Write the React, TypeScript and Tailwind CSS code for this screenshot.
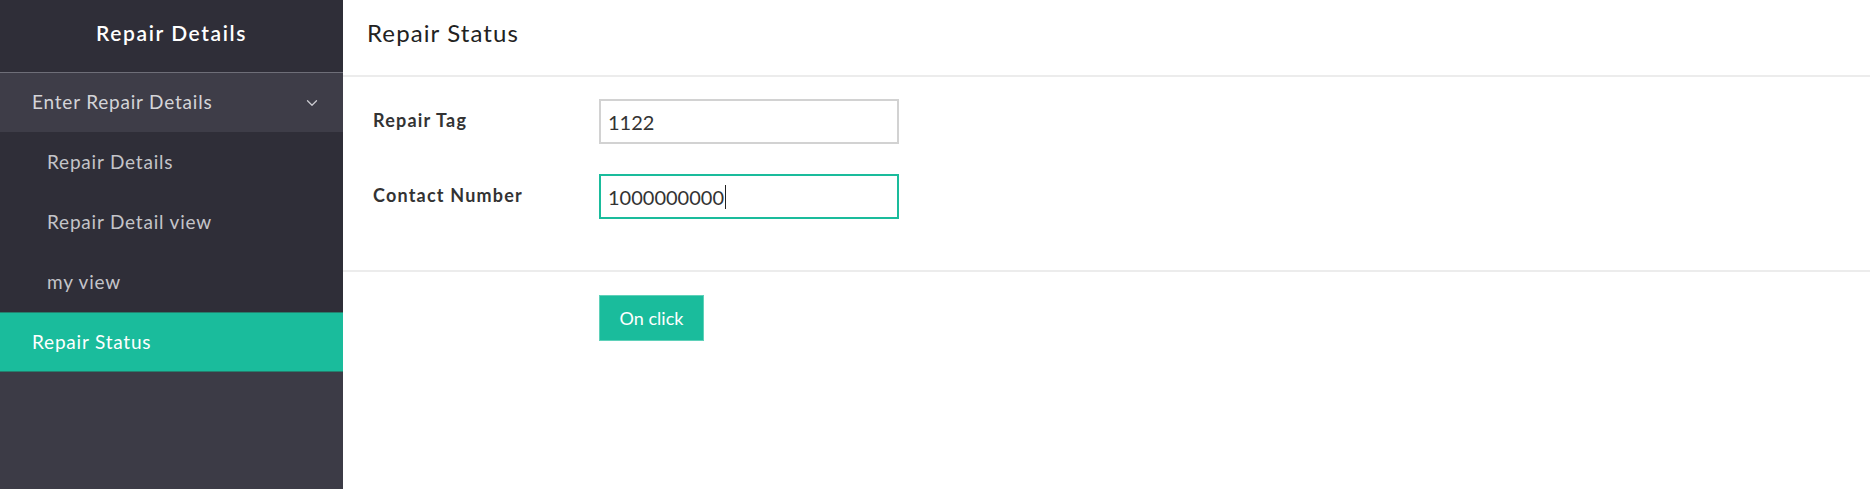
import React from 'react';
import { ChevronDown } from 'lucide-react';

const subItems = ['Repair Details', 'Repair Detail view', 'my view'];

export default function App() {
  return (
    <div
      className="flex h-[489px] w-full bg-white"
      style={{ fontFamily: 'Lato, "Open Sans", sans-serif' }}
    >
      {/* Sidebar */}
      <aside className="flex w-[343px] shrink-0 flex-col bg-[#3c3b46]">
        <div className="flex h-[73px] items-center justify-center border-b border-[#6e6e78] bg-[#2f2e38] pb-[7px]">
          <h1 className="text-[21px] font-semibold tracking-[1.6px] text-white">Repair Details</h1>
        </div>
        <div className="flex h-[59px] items-center justify-between bg-[#3e3d48] pl-[32px] pr-[22px]">
          <span className="text-[19px] tracking-[0.8px] text-[#d4d4d8]">Enter Repair Details</span>
          <ChevronDown className="h-[18px] w-[18px] text-[#c9c9cf]" strokeWidth={1.75} />
        </div>
        <ul className="bg-[#2f2e38]">
          {subItems.map((item) => (
            <li key={item} className="flex h-[60px] items-center pl-[47px] text-[19px] tracking-[0.8px] text-[#c4c4c9]">
              {item}
            </li>
          ))}
        </ul>
        <div className="flex h-[60px] items-center border-y border-[#257f6d] bg-[#1abc9c] pl-[32px] text-[19px] tracking-[0.8px] text-white">
          Repair Status
        </div>
      </aside>

      {/* Main */}
      <main className="flex flex-1 flex-col">
        <div className="flex h-[77px] items-center border-b-2 border-[#ececec] pl-[24px] pb-[9px]">
          <h2 className="text-[24px] tracking-[1.1px] text-[#222]">Repair Status</h2>
        </div>
        <div className="flex flex-col gap-[30px] border-b-2 border-[#ececec] pl-[30px] pt-[22px] pb-[51px]">
          <div className="flex items-center">
            <label className="w-[226px] pb-[2px] text-[18px] font-bold tracking-[1.2px] text-[#333]">Repair Tag</label>
            <input
              defaultValue="1122"
              className="h-[45px] w-[300px] border-2 border-[#d2d2d2] px-[7px] text-[20px] text-[#333] outline-none"
            />
          </div>
          <div className="flex items-center">
            <label className="w-[226px] pb-[2px] text-[18px] font-bold tracking-[1.2px] text-[#333]">Contact Number</label>
            <div className="flex h-[45px] w-[300px] items-center border-2 border-[#1abc9c] px-[7px] text-[20px] text-[#333]">
              1000000000
              <span className="ml-[1px] inline-block h-[24px] w-[1px] bg-[#222]" />
            </div>
          </div>
        </div>
        <div className="pl-[256px] pt-[23px]">
          <button className="h-[46px] w-[105px] border border-[#5fd1b9] bg-[#1abc9c] text-[18px] text-white">
            On click
          </button>
        </div>
      </main>
    </div>
  );
}
